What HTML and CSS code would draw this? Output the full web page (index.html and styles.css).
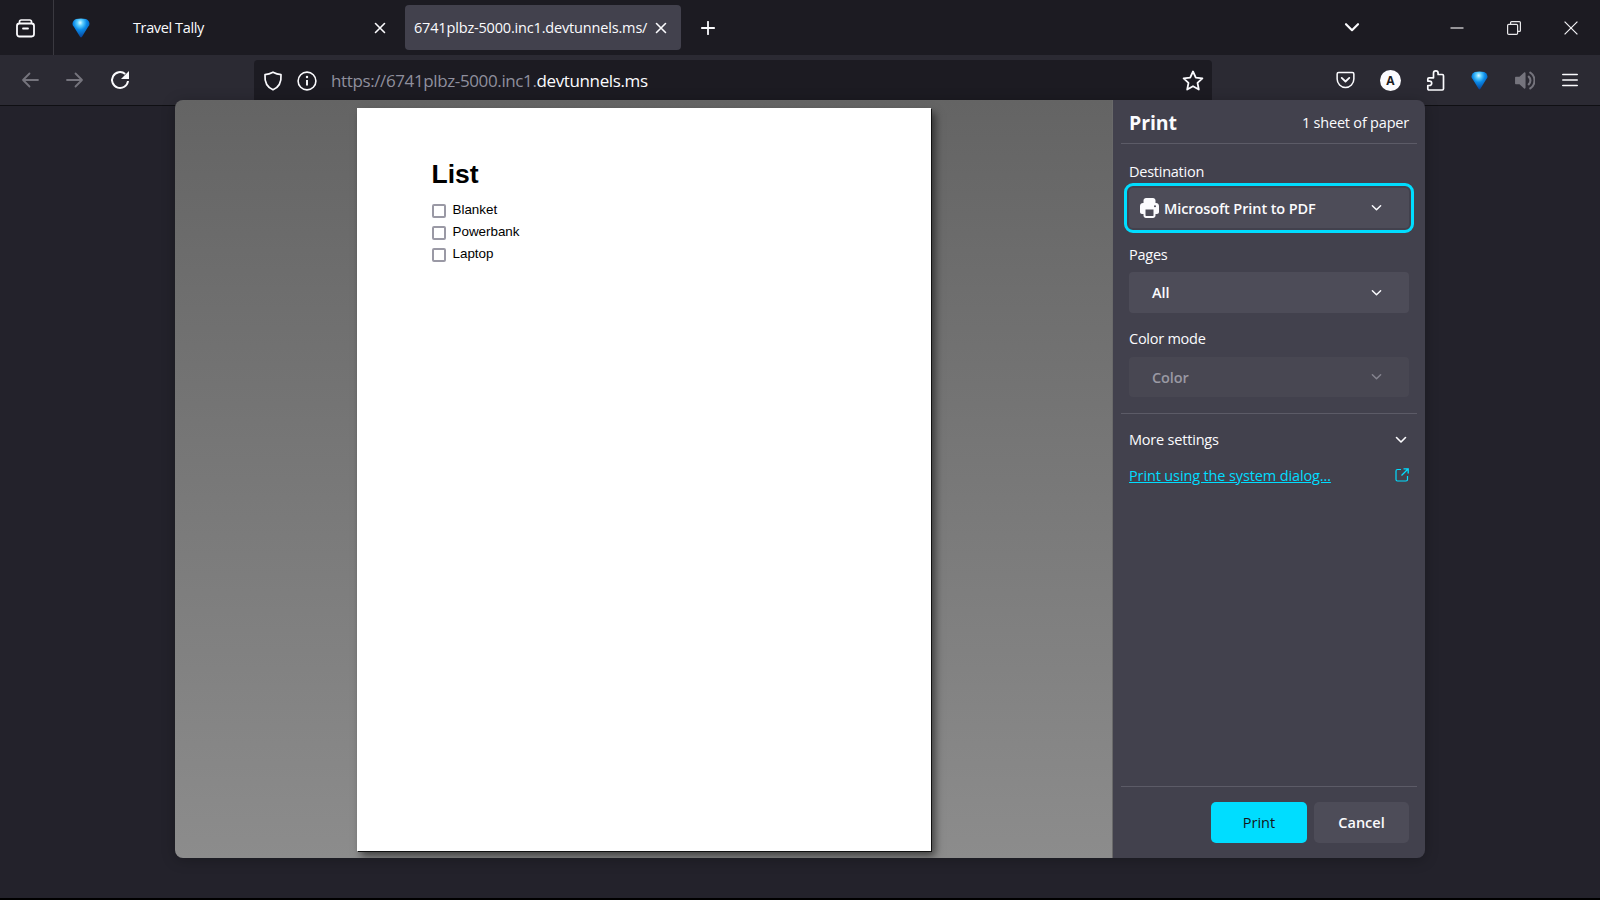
FILE: index.html
```html
<!DOCTYPE html>
<html lang="en">
<head>
<meta charset="utf-8">
<title>Print</title>
<link rel="stylesheet" href="styles.css">
</head>
<body>
<svg class="defs" width="0" height="0" aria-hidden="true">
  <defs>
    <radialGradient id="gem" cx="0.45" cy="0.22" r="0.8">
      <stop offset="0" stop-color="#dff8ff"/>
      <stop offset="0.2" stop-color="#5ccfff"/>
      <stop offset="0.48" stop-color="#0a8ae8"/>
      <stop offset="1" stop-color="#083f94"/>
    </radialGradient>
    <symbol id="diamond" viewBox="0 0 18 20">
      <path d="M4 1Q9 .2 14 1Q17 2 17.500 5.500Q17.800 7 16 9L10 18.800Q9 20 8 18.800L2 9Q.2 7 .5 5.500Q1 2 4 1z" fill="url(#gem)"/>
    </symbol>
    <symbol id="chev" viewBox="0 0 12 8">
      <path d="M1.500 1.500 6 6l4.500-4.500" fill="none" stroke="currentColor" stroke-width="1.600" stroke-linecap="round" stroke-linejoin="round"/>
    </symbol>
    <symbol id="x" viewBox="0 0 12 12">
      <path d="M1.500 1.500l9 9M10.500 1.500l-9 9" fill="none" stroke="currentColor" stroke-width="1.600" stroke-linecap="round"/>
    </symbol>
  </defs>
</svg>
<div class="app">
  <header class="tabstrip">
    <div class="view-btn">
      <svg class="ico-view" viewBox="0 0 20 20"><path d="M4 5.500V3.800C4 2.800 4.700 2 5.800 2h8.400C15.300 2 16 2.800 16 3.800v1.700" fill="none" stroke="#fbfbfe" stroke-width="1.700"/><rect x="1.500" y="5.500" width="17" height="13" rx="2.400" fill="none" stroke="#fbfbfe" stroke-width="1.800"/><path d="M7.500 10.500h5" stroke="#fbfbfe" stroke-width="1.800" stroke-linecap="round"/></svg>
    </div>
    <div class="tab">
      <svg class="fav"><use href="#diamond"/></svg>
      <span class="tab-title">Travel Tally</span>
      <svg class="tab-x"><use href="#x"/></svg>
    </div>
    <div class="tab tab-active">
      <span class="tab-url">6741plbz-5000.inc1.devtunnels.ms/</span>
      <svg class="tab-x"><use href="#x"/></svg>
    </div>
    <svg class="plus" viewBox="0 0 14 14"><path d="M7 .8v12.400M.8 7h12.400" stroke="#fbfbfe" stroke-width="1.800" stroke-linecap="round"/></svg>
    <div class="strip-right">
      <svg class="list-chev"><use href="#chev"/></svg>
      <div class="win-btns">
        <svg class="win" viewBox="0 0 14 14"><path d="M0.500 7h13" stroke="#e8e8ea" stroke-width="1.200"/></svg>
        <svg class="win" viewBox="0 0 14 14"><path d="M3.600 3V1.600c0-.6.400-1 1-1h7.800c.6 0 1 .4 1 1v7.800c0 .6-.4 1-1 1H11" fill="none" stroke="#e8e8ea" stroke-width="1.200"/><rect x=".6" y="3.400" width="10" height="10" rx="1.200" fill="none" stroke="#e8e8ea" stroke-width="1.200"/></svg>
        <svg class="win" viewBox="0 0 14 14"><path d="M.6.6l12.800 12.800M13.400.6.6 13.400" stroke="#f2f2f4" stroke-width="1.200"/></svg>
      </div>
    </div>
  </header>

  <nav class="toolbar">
    <div class="nav-btns">
      <svg class="nav-ico" viewBox="0 0 18 18"><path d="M17 9H2M8.500 2.500 2 9l6.500 6.500" fill="none" stroke="#75747d" stroke-width="1.800" stroke-linecap="round" stroke-linejoin="round"/></svg>
      <svg class="nav-ico" viewBox="0 0 18 18"><path d="M1 9h15M9.500 2.500 16 9l-6.500 6.500" fill="none" stroke="#75747d" stroke-width="1.800" stroke-linecap="round" stroke-linejoin="round"/></svg>
      <svg class="nav-ico nav-reload" viewBox="0 0 20 20"><path d="M18 11a8 8 0 1 1-2.800-7.100" fill="none" stroke="#fbfbfe" stroke-width="2"/><path d="M19 1v8h-8z" fill="#fbfbfe"/></svg>
    </div>
    <div class="urlbar">
      <svg class="shield" viewBox="0 0 20 20"><path d="M10 1.200c2.800 1.500 5.200 2.200 8 2.500.6 7.800-2.800 12.800-8 15.100C4.800 16.500 1.400 11.500 2 3.700c2.800-.3 5.200-1 8-2.500z" fill="none" stroke="#fbfbfe" stroke-width="1.700" stroke-linejoin="round"/></svg>
      <svg class="info" viewBox="0 0 20 20"><circle cx="10" cy="10" r="8.900" fill="none" stroke="#fbfbfe" stroke-width="1.600"/><path d="M10 9v5.500" stroke="#fbfbfe" stroke-width="1.900"/><circle cx="10" cy="6" r="1.200" fill="#fbfbfe"/></svg>
      <span class="url"><span class="url-dim">https://6741plbz-5000.inc1.</span>devtunnels.ms</span>
      <svg class="star" viewBox="0 0 22 21"><path d="M11 1.500l2.800 6.100 6.600.8-4.900 4.500 1.300 6.600-5.800-3.300-5.800 3.300 1.300-6.600L1.600 8.400l6.600-.8z" fill="none" stroke="#fbfbfe" stroke-width="1.800" stroke-linejoin="round"/></svg>
    </div>
    <div class="tools">
      <svg class="tool pocket" viewBox="0 0 20 18"><path d="M2.800 1.200h14.400c.9 0 1.600.7 1.600 1.600V8c0 4.800-3.900 8.800-8.800 8.800S1.200 12.800 1.200 8V2.800c0-.9.700-1.600 1.600-1.600z" fill="none" stroke="#fbfbfe" stroke-width="1.600"/><path d="M6 6.800l4 3.800 4-3.800" fill="none" stroke="#fbfbfe" stroke-width="1.900" stroke-linecap="round" stroke-linejoin="round"/></svg>
      <span class="avatar">A</span>
      <svg class="tool puzzle" viewBox="0 0 20 21"><path d="M8.500 4.500V3.200a2.300 2.300 0 0 1 4.600 0v1.300h4.200c.7 0 1.200.5 1.200 1.200v13.100c0 .7-.5 1.200-1.200 1.200H4c-.7 0-1.200-.5-1.200-1.200v-3.300h1.700a2.200 2.200 0 0 0 0-4.400H2.800V9c0-.7.500-1.200 1.200-1.200h4.500z" fill="none" stroke="#fbfbfe" stroke-width="1.700" stroke-linejoin="round"/></svg>
      <svg class="tool gem"><use href="#diamond"/></svg>
      <svg class="tool speaker" viewBox="0 0 20 20"><path d="M1 7.500C1 6.900 1.400 6.500 2 6.500h3.200L9.600 2.400C10.200 1.900 11 2.300 11 3v14c0 .7-.8 1.100-1.400.6L5.200 13.500H2c-.6 0-1-.4-1-1z" fill="#75747d"/><path d="M14 6.300a5 5 0 0 1 0 7.400" fill="none" stroke="#75747d" stroke-width="2" stroke-linecap="round"/><path d="M15.500 2.500a9 9 0 0 1 0 15" fill="none" stroke="#75747d" stroke-width="2" stroke-linecap="round"/></svg>
      <svg class="tool burger" viewBox="0 0 16 14"><path d="M.8 1.500h14.400M.8 7h14.400M.8 12.500h14.400" stroke="#fbfbfe" stroke-width="1.700" stroke-linecap="round"/></svg>
    </div>
  </nav>

  <main class="content"></main>
  <div class="bottom-line"></div>

  <section class="dialog">
    <div class="preview">
      <article class="sheet">
        <h1 class="sheet-title">List</h1>
        <ul class="sheet-list">
          <li class="sheet-item"><span class="check"></span><span>Blanket</span></li>
          <li class="sheet-item"><span class="check"></span><span>Powerbank</span></li>
          <li class="sheet-item"><span class="check"></span><span>Laptop</span></li>
        </ul>
      </article>
    </div>
    <aside class="panel">
      <div class="panel-head">
        <span class="panel-title">Print</span>
        <span class="panel-sheets">1 sheet of paper</span>
      </div>
      <div class="fields">
        <label class="field-label field-first">Destination</label>
        <div class="select select-focus">
          <svg class="printer" viewBox="0 0 19 20"><path fill-rule="evenodd" d="M6 0h7c1.400 0 2.500 1.100 2.500 2.500V5H16c1.700 0 3 1.300 3 3v6c0 1.100-.9 2-2 2h-1.500v1.500c0 1.400-1.100 2.500-2.500 2.500H6c-1.400 0-2.500-1.100-2.500-2.500V16H2c-1.100 0-2-.9-2-2V8c0-1.700 1.300-3 3-3h.5V2.500C3.500 1.100 4.600 0 6 0zM5.500 11.500v6c0 .3.200.5.500.5h7c.3 0 .5-.2.500-.5v-6zM15 7.200a1 1 0 1 0 0 2 1 1 0 0 0 0-2z" fill="#fbfbfe"/></svg>
          <span class="select-text select-dest">Microsoft Print to PDF</span>
          <svg class="select-chev"><use href="#chev"/></svg>
        </div>
        <label class="field-label">Pages</label>
        <div class="select select-tall">
          <span class="select-text">All</span>
          <svg class="select-chev"><use href="#chev"/></svg>
        </div>
        <label class="field-label field-color">Color mode</label>
        <div class="select select-off">
          <span class="select-text">Color</span>
          <svg class="select-chev"><use href="#chev"/></svg>
        </div>
      </div>
      <div class="more">
        <div class="more-row">
          <span>More settings</span>
          <svg class="more-chev"><use href="#chev"/></svg>
        </div>
        <div class="link-row">
          <a class="sys-link" href="#">Print using the system dialog…</a>
          <svg class="ext" viewBox="0 0 14 14"><path d="M6 1.500H2.500c-.8 0-1.500.7-1.500 1.500v8.500c0 .8.700 1.500 1.500 1.500H11c.8 0 1.500-.7 1.500-1.500V8" fill="none" stroke="#00ddff" stroke-width="1.200"/><path d="M8.500.8h4.700v4.700M13 1 6.500 7.500" fill="none" stroke="#00ddff" stroke-width="1.300"/></svg>
        </div>
      </div>
      <div class="panel-foot">
        <button class="btn btn-primary" type="button">Print</button>
        <button class="btn" type="button">Cancel</button>
      </div>
    </aside>
  </section>
</div>
</body>
</html>
```
FILE: styles.css
```css
* { box-sizing: border-box; }
html, body { margin: 0; height: 100%; }
body {
  background: #23222b;
  color: #fbfbfe;
  font-family: "Open Sans", "Liberation Sans", sans-serif;
  overflow: hidden;
}
.defs { position: absolute; }
.app {
  position: relative;
  width: 1600px;
  height: 900px;
  display: flex;
  flex-direction: column;
}

/* tab strip */
.tabstrip {
  height: 55px;
  flex: none;
  display: flex;
  align-items: center;
  background: #1c1b22;
}
.view-btn {
  width: 54px;
  height: 55px;
  flex: none;
  display: flex;
  align-items: center;
  padding-left: 15px;
  border-right: 1px solid #3a3940;
}
.ico-view { width: 21px; height: 20px; }
.tab {
  height: 45px;
  display: flex;
  align-items: center;
  width: 351px;
  padding-left: 18px;
  padding-right: 19px;
  font-size: 14.500px;
}
.fav { width: 18px; height: 20px; flex: none; }
.tab-title { margin-left: 43px; flex: 1; letter-spacing: -0.38px; }
.tab-x { width: 12px; height: 12px; flex: none; color: #fbfbfe; }
.tab-active {
  width: 276px;
  padding: 0 14px 0 9px;
  background: #42414d;
  border-radius: 4px;
}
.tab-url { flex: 1; font-size: 14.500px; letter-spacing: -0.17px; white-space: nowrap; }
.plus { width: 14px; height: 14px; margin-left: 20px; flex: none; }
.strip-right {
  margin-left: auto;
  display: flex;
  align-items: center;
}
.list-chev { width: 16px; height: 11px; color: #fbfbfe; margin-right: 90px; }
.win-btns { display: flex; align-items: center; gap: 43px; padding-right: 22px; }
.win { width: 14px; height: 14px; }

/* toolbar */
.toolbar {
  height: 51px;
  flex: none;
  display: flex;
  align-items: flex-start;
  background: #2b2a33;
  border-bottom: 1px solid #0f0f13;
}
.nav-btns {
  width: 254px;
  height: 50px;
  flex: none;
  display: flex;
  align-items: center;
  gap: 27px;
  padding-left: 21px;
}
.nav-ico { width: 18px; height: 18px; flex: none; }
.nav-reload { width: 20px; height: 20px; margin-left: -1px; }
.urlbar {
  width: 958px;
  height: 48px;
  margin-top: 5px;
  flex: none;
  display: flex;
  align-items: flex-start;
  padding: 6px 8px 0 9px;
  background: #1c1b22;
  border-radius: 4px;
}
.shield { width: 20px; height: 20px; flex: none; margin-top: 5px; }
.info { width: 20px; height: 20px; flex: none; margin-left: 14px; margin-top: 5px; }
.url { flex: 1; margin-left: 14px; font-size: 17px; line-height: 30px; letter-spacing: -0.38px; white-space: nowrap; }
.url-dim { color: #8f8f9d; }
.star { width: 22px; height: 21px; flex: none; margin-top: 4px; }
.tools {
  flex: 1;
  height: 50px;
  position: relative;
  display: flex;
  align-items: center;
  padding-left: 124px;
}
.tool { flex: none; }
.pocket { width: 19px; height: 18px; }
.avatar {
  width: 21px;
  height: 21px;
  margin-left: 25px;
  flex: none;
  border-radius: 50%;
  background: #fbfbfe;
  color: #1c1b22;
  font-size: 12px;
  font-weight: 700;
  line-height: 21px;
  text-align: center;
}
.puzzle { width: 20px; height: 21px; margin-left: 24px; }
.gem { width: 17px; height: 19px; margin-left: 26px; }
.speaker { width: 21px; height: 21px; margin-left: 26px; }
.burger { width: 16px; height: 14px; margin-left: 27px; }

.content { flex: 1; background: #23222b; }
.bottom-line { height: 2px; flex: none; background: #000; }

/* dialog */
.dialog {
  position: absolute;
  left: 175px;
  top: 100px;
  width: 1250px;
  height: 758px;
  display: flex;
  border-radius: 8px;
  overflow: hidden;
  box-shadow: 0 2px 14px rgba(0, 0, 0, .25);
}
.preview {
  width: 938px;
  flex: none;
  display: flex;
  justify-content: center;
  padding-top: 8px;
  background: linear-gradient(#646464, #8c8c8c);
  border-right: 1px solid #6a6a6a;
}
.sheet {
  width: 574px;
  height: 743px;
  background: #fff;
  color: #000;
  padding: 49px 0 0 75px;
  box-shadow: 1px 1px 0 #111, 4px 5px 8px rgba(0, 0, 0, .55);
  font-family: "Liberation Sans", Arial, sans-serif;
}
.sheet-title {
  margin: 0;
  font-size: 26.500px;
  line-height: 34px;
  font-weight: 700;
}
.sheet-list { list-style: none; margin: 7px 0 0; padding: 0; }
.sheet-item {
  height: 22px;
  display: flex;
  align-items: center;
  gap: 7px;
  font-size: 13.400px;
}
.check {
  width: 14px;
  height: 14px;
  margin-top: 4px;
  border: 2px solid #9a99a5;
  border-radius: 2px;
  flex: none;
}

/* panel */
.panel {
  flex: 1;
  display: flex;
  flex-direction: column;
  padding: 0 8px;
  background: #42414d;
  font-size: 15px;
}
.panel-head {
  height: 44px;
  flex: none;
  display: flex;
  align-items: center;
  justify-content: space-between;
  padding: 2px 8px 0;
  border-bottom: 1px solid #5c5b67;
}
.panel-title { font-size: 19.500px; font-weight: 700; letter-spacing: -0.1px; }
.panel-sheets { font-size: 14.500px; letter-spacing: -0.2px; }
.fields { padding: 0 8px; display: flex; flex-direction: column; }
.field-label {
  height: 20px;
  line-height: 20px;
  margin-top: 17px;
  margin-bottom: 7px;
  letter-spacing: -0.25px;
  font-size: 14.500px;
}
.field-first { margin-top: 18px; margin-bottom: 6px; }
.field-color { margin-top: 16px; margin-bottom: 8px; }
.select {
  height: 40px;
  display: flex;
  align-items: center;
  padding: 0 27px 0 23px;
  background: #4d4c58;
  border-radius: 4px;
  font-weight: 600;
}
.select-tall { height: 41px; }
.select-focus {
  padding-left: 11px;
  outline: 3px solid #00ddff;
  outline-offset: 2px;
}
.select-text { flex: 1; font-size: 14.500px; letter-spacing: -0.1px; }
.select-dest { margin-left: 5px; }
.printer { width: 19px; height: 20px; flex: none; }
.select-chev { width: 11px; height: 8px; color: #fbfbfe; flex: none; }
.select-off { background: #484752; color: #9a99a3; font-weight: 600; }
.select-off .select-chev { color: #85848f; }
.more {
  margin-top: 16px;
  border-top: 1px solid #5c5b67;
  padding: 0 8px;
}
.more-row {
  height: 51px;
  display: flex;
  align-items: center;
  justify-content: space-between;
  font-size: 14.500px;
  letter-spacing: -0.2px;
  padding-right: 2px;
}
.more-chev { width: 12px; height: 8px; color: #fbfbfe; margin-top: 1px; }
.link-row {
  height: 18px;
  margin-top: 1px;
  display: flex;
  align-items: center;
  justify-content: space-between;
}
.sys-link { color: #00ddff; font-size: 14.500px; letter-spacing: -0.13px; }
.ext { width: 14px; height: 14px; }
.panel-foot {
  margin-top: auto;
  height: 72px;
  flex: none;
  display: flex;
  justify-content: flex-end;
  gap: 7px;
  padding: 15px 8px 0;
  border-top: 1px solid #5c5b67;
}
.btn {
  width: 95px;
  height: 41px;
  border: 0;
  border-radius: 5px;
  background: #4d4c58;
  color: #fbfbfe;
  font: 600 14.500px "Open Sans", "Liberation Sans", sans-serif;
}
.btn-primary { width: 96px; background: #00ddff; color: #15141a; font-weight: 500; }
```
